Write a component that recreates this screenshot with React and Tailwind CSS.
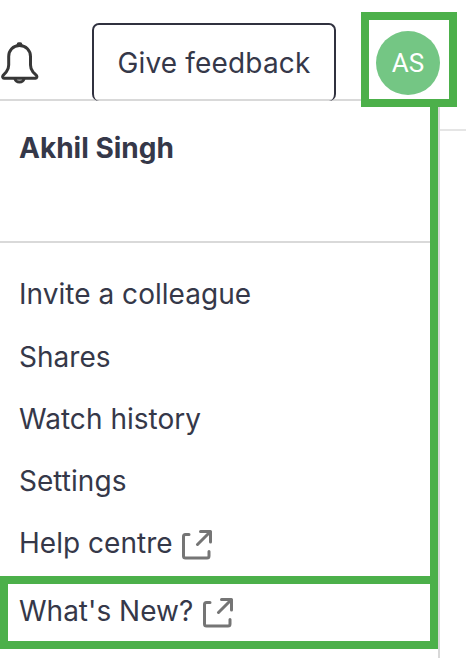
import React from "react";

const menuItems = [
    { label: "Invite a colleague" },
    { label: "Shares" },
    { label: "Watch history" },
    { label: "Settings" },
    { label: "Help centre", external: true },
];

const BellIcon = () => (
    <svg className="h-[46px] w-10 shrink-0" viewBox="0 0 40 46" fill="none" stroke="#373737" strokeWidth="3" strokeLinejoin="round" strokeLinecap="round">
        <path d="M19.5 6.5C13 6.5 8.7 11.5 8.7 17.5v8.500c0 3-.8 5-2.500 7l-3.200 3.500c-.8 1.200-.3 2.700 1 2.700h31.500c1.300 0 1.800-1.500 1-2.700L33 33c-1.700-2-2.500-4-2.500-7v-8.500C30.500 11.500 26 6.500 19.500 6.500Z" />
        <path d="M15 40a4.600 3.800 0 0 0 9 0" />
        <path d="M18.700 5.200h1.600" strokeWidth="4" />
    </svg>
);

const ExternalIcon = () => (
    <svg className="mt-1 h-8 w-8 shrink-0" viewBox="0 0 32 32" fill="none" stroke="#757575" strokeWidth="3" strokeLinejoin="round" strokeLinecap="round">
        <path d="M9 5.500H5.500a2 2 0 0 0-2 2V27a2 2 0 0 0 2 2h21.500a2 2 0 0 0 2-2v-4.500" />
        <path d="M20.500 2.500H30.500V13M30 3L17.500 15.500" />
    </svg>
);

const Header = () => (
    <header className="flex h-[101px] items-start">
        <div className="flex h-[101px] w-[361px] shrink-0 items-start border-b-2 border-[#d9d9d9]">
            <div className="pt-[39px]">
                <BellIcon />
            </div>
            <button className="ml-[52px] mt-[23px] h-[78px] w-[244px] shrink-0 rounded-[7px] border-2 border-b-0 border-[#30313f] text-[28px] leading-none tracking-[0.15px]">
                Give feedback
            </button>
        </div>
        <div className="relative z-10 mt-3 flex h-[95px] w-24 shrink-0 justify-center border-8 border-[#4cb04a] bg-white pt-[11px]">
            <div className="mr-[2px] flex h-16 w-16 items-center justify-center rounded-full bg-[#74c684] font-[Roboto] text-[26px] text-white">
                AS
            </div>
        </div>
    </header>
);

const App = () => {
    return (
        <div className="h-[658px] w-[466px] overflow-hidden bg-white font-[Inter,sans-serif] text-[28px] text-[#353849]">
            <Header />
            <div className="flex h-[557px]">
                <div className="flex w-[440px] shrink-0 flex-col border-r-2 border-[#d9d9d9]">
                    <div className="h-[475px] border-r-8 border-[#4cb04a]">
                        <div className="h-[142px] border-b-2 border-[#d9d9d9] pl-[19px] pt-[27px] font-bold leading-10">
                            Akhil Singh
                        </div>
                        <ul className="pl-[19px] pt-[20.25px]">
                            {menuItems.map((item) => (
                                <li key={item.label} className="flex h-[62.25px] items-center gap-[7px] tracking-[0.03px]">
                                    <span>{item.label}</span>
                                    {item.external && <ExternalIcon />}
                                </li>
                            ))}
                        </ul>
                    </div>
                    <div className="flex h-[73px] items-center gap-2 border-8 border-[#4cb04a] pb-[3px] pl-[11px]">
                        <span>What's New?</span>
                        <ExternalIcon />
                    </div>
                </div>
                <div className="mt-7 h-0.5 grow bg-[#e5e5e5]" />
            </div>
        </div>
    );
};

export default App;
